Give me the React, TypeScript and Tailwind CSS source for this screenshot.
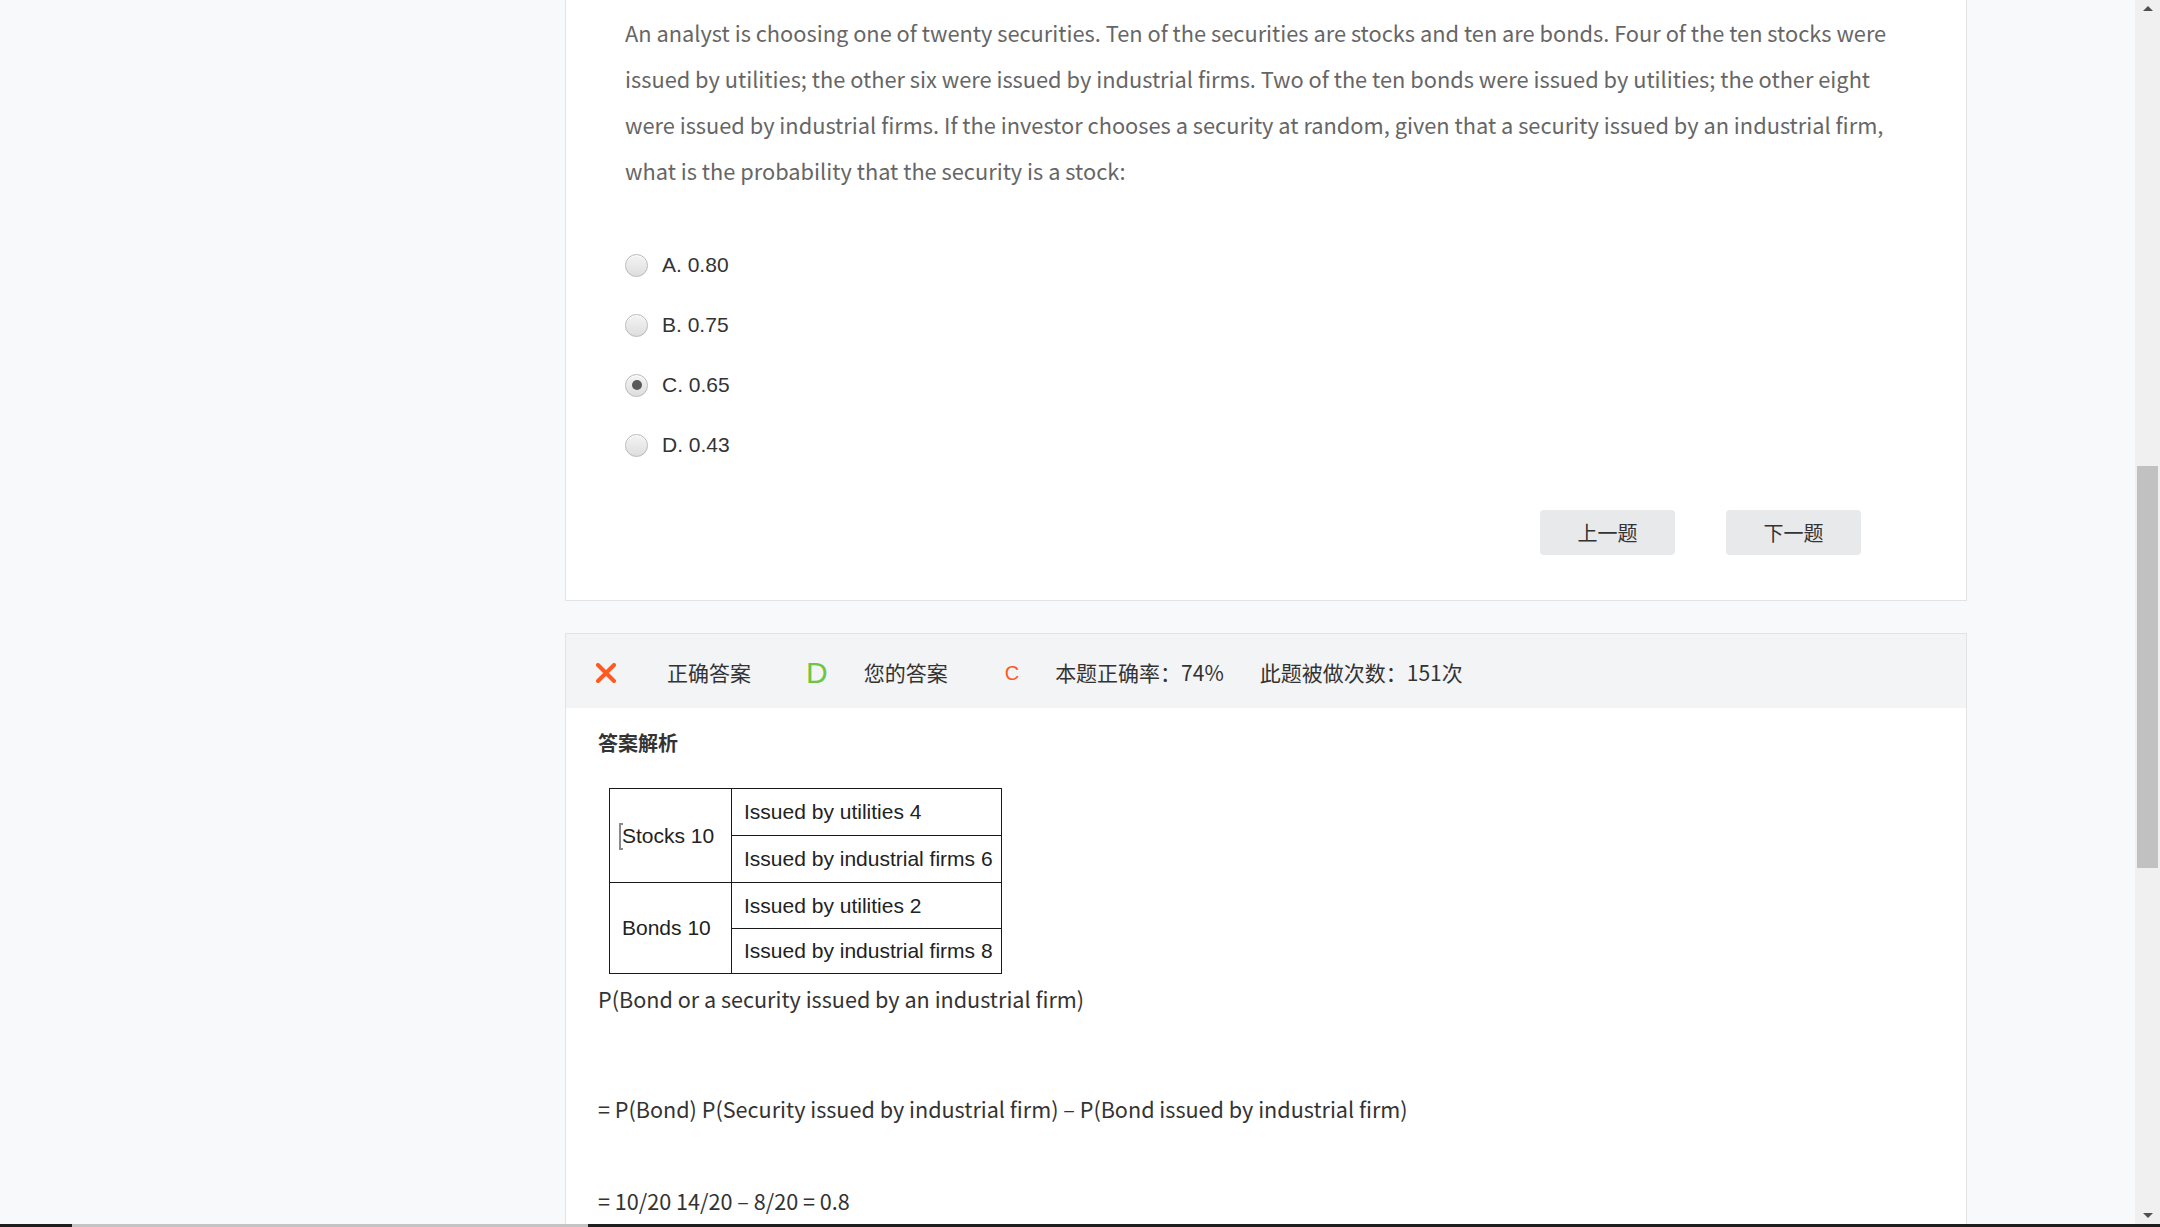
import { useState } from "react";

const options = [
  { key: "A", value: "0.80" },
  { key: "B", value: "0.75" },
  { key: "C", value: "0.65" },
  { key: "D", value: "0.43" },
];

const yahei = "font-['Noto_Sans_CJK_SC','Noto_Sans',sans-serif]";
const arial = "font-['Liberation_Sans','Noto_Sans_CJK_SC',sans-serif]";

function Radio({ checked }: { checked: boolean }) {
  return (
    <span className="flex h-[23px] w-[23px] shrink-0 items-center justify-center rounded-full border border-[#b9b9b9] bg-gradient-to-b from-[#f4f4f4] to-[#dedede] shadow-[inset_0_1px_0_#fff]">
      {checked && <span className="h-[10px] w-[10px] rounded-full bg-[#5a5a5a]" />}
    </span>
  );
}

function Cell({ children, className = "", rowSpan }: { children: React.ReactNode; className?: string; rowSpan?: number }) {
  return (
    <td rowSpan={rowSpan} className={`border border-[#1a1a1a] py-0 ${className}`}>
      {children}
    </td>
  );
}

export default function App() {
  const [selected, setSelected] = useState("C");

  return (
    <div className="flex h-[1227px] w-full flex-col overflow-hidden bg-[#f8f9fb]">
      <div className="flex min-h-0 flex-1">
        <div className="min-w-0 flex-1 overflow-hidden">
          <div className="ml-[565px] w-[1402px]">
            {/* question card */}
            <div className="border-x border-b border-[#e3e3e3] bg-white pb-[45px] pl-[59px] pr-[40px] pt-[10px]">
              <p className={`${yahei} text-[21.8px] leading-[46px] text-[#666]`}>
                An analyst is choosing one of twenty securities. Ten of the securities are stocks and ten are bonds. Four of the ten stocks were
                <br />
                issued by utilities; the other six were issued by industrial firms. Two of the ten bonds were issued by utilities; the other eight
                <br />
                were issued by industrial firms. If the investor chooses a security at random, given that a security issued by an industrial firm,
                <br />
                what is the probability that the security is a stock:
              </p>

              <div className="mt-[41px] flex flex-col">
                {options.map((o) => (
                  <label
                    key={o.key}
                    onClick={() => setSelected(o.key)}
                    className="flex h-[60px] cursor-pointer items-center gap-[14px]"
                  >
                    <Radio checked={selected === o.key} />
                    <span className={`${arial} text-[21px] text-[#333]`}>
                      {o.key}. {o.value}
                    </span>
                  </label>
                ))}
              </div>

              <div className="mr-[65px] mt-[35px] flex justify-end gap-[51px]">
                <button className={`${yahei} h-[45px] w-[135px] rounded-[4px] bg-[#e8e9eb] text-[20px] text-[#333]`}>
                  上一题
                </button>
                <button className={`${yahei} h-[45px] w-[135px] rounded-[4px] bg-[#e8e9eb] text-[20px] text-[#333]`}>
                  下一题
                </button>
              </div>
            </div>

            {/* answer section */}
            <div className="mt-[32px] border-x border-t border-[#e3e3e3] bg-white pb-[40px]">
              <div className={`${yahei} flex h-[74px] items-center bg-[#f3f4f6] pl-[29px] pt-[3px] text-[21px] text-[#333]`}>
                <svg width="22" height="20" viewBox="0 0 22 20" className="shrink-0">
                  <path d="M3 2 L19 18 M19 2 L3 18" stroke="#ff5a1f" strokeWidth="4" strokeLinecap="round" />
                </svg>
                <span className="ml-[50px]">正确答案</span>
                <span className={`${arial} ml-[55px] text-[30px] font-light leading-none text-[#6cc644]`}>D</span>
                <span className="ml-[36px]">您的答案</span>
                <span className={`${arial} ml-[57px] text-[20px] text-[#ff5722]`}>C</span>
                <span className="ml-[36px]">本题正确率：74%</span>
                <span className="ml-[36px]">此题被做次数：151次</span>
              </div>

              <div className="pl-[32px]">
                <h3 className={`${yahei} mt-[21px] text-[20px] font-bold leading-[28px] text-[#333]`}>答案解析</h3>

                <table className={`${arial} ml-[11px] mt-[31px] border-collapse text-[21px] leading-[24px] text-[#222]`}>
                  <tbody>
                    <tr className="h-[47px]">
                      <Cell rowSpan={2} className="w-[122px] px-[12px]">
                        <span className="relative whitespace-nowrap">
                          <span className="absolute left-[-3px] top-[-1px] h-[27px] w-[4px] border-y-2 border-l-2 border-[#8a8a8a]" />
                          Stocks 10
                        </span>
                      </Cell>
                      <Cell className="whitespace-nowrap pl-[12px] pr-[8px]">Issued by utilities 4</Cell>
                    </tr>
                    <tr className="h-[47px]">
                      <Cell className="whitespace-nowrap pl-[12px] pr-[8px]">Issued by industrial firms 6</Cell>
                    </tr>
                    <tr className="h-[46px]">
                      <Cell rowSpan={2} className="whitespace-nowrap px-[12px]">Bonds 10</Cell>
                      <Cell className="whitespace-nowrap pl-[12px] pr-[8px]">Issued by utilities 2</Cell>
                    </tr>
                    <tr className="h-[45px]">
                      <Cell className="whitespace-nowrap pl-[12px] pr-[8px]">Issued by industrial firms 8</Cell>
                    </tr>
                  </tbody>
                </table>

                <div className={`${yahei} text-[21.6px] leading-[28px] text-[#333]`}>
                  <p className="mt-[11px]">P(Bond or a security issued by an industrial firm)</p>
                  <p className="mt-[82px]">= P(Bond) P(Security issued by industrial firm) – P(Bond issued by industrial firm)</p>
                  <p className="mt-[64px]">= 10/20 14/20 – 8/20 = 0.8</p>
                </div>
              </div>
            </div>
          </div>
        </div>

        {/* scrollbar */}
        <div className="flex w-[25px] shrink-0 flex-col items-center bg-[#f0f0f0]">
          <span className="mt-[6px] h-0 w-0 border-x-[5px] border-b-[5px] border-x-transparent border-b-[#505050]" />
          <div className="mt-[455px] h-[402px] w-[21px] bg-[#c1c1c1]" />
          <div className="flex-1" />
          <span className="mb-[6px] h-0 w-0 border-x-[5px] border-t-[5px] border-x-transparent border-t-[#505050]" />
        </div>
      </div>

      {/* bottom edge */}
      <div className="flex h-[3px] shrink-0">
        <div className="w-[72px] bg-[#1e1e1e]" />
        <div className="w-[516px] bg-[#c4c4c4]" />
        <div className="flex-1 bg-[#1e1e1e]" />
      </div>
    </div>
  );
}
